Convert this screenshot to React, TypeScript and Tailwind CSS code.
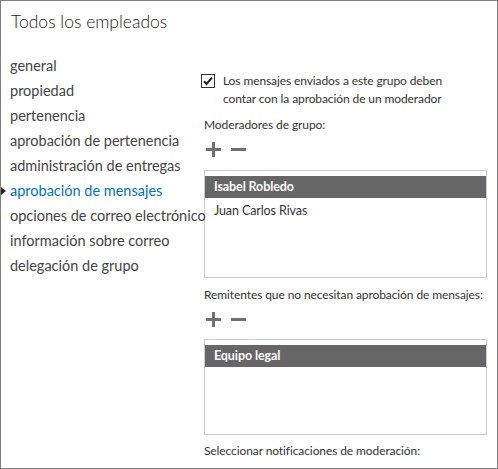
import React from "react";

const font = { fontFamily: '"Segoe UI", Lato, "Open Sans", sans-serif' };

const navItems = [
  "general",
  "propiedad",
  "pertenencia",
  "aprobación de pertenencia",
  "administración de entregas",
  "aprobación de mensajes",
  "opciones de correo electrónico",
  "información sobre correo",
  "delegación de grupo",
];

const PlusMinus = () => (
  <div className="flex items-center gap-[10px] h-[24px] pl-[2px]">
    <svg width="15" height="15" viewBox="0 0 15 15">
      <rect x="6" y="0" width="3" height="15" fill="#707070" />
      <rect x="0" y="6" width="15" height="3" fill="#707070" />
    </svg>
    <svg width="15" height="15" viewBox="0 0 15 15">
      <rect x="0" y="6" width="15" height="3" fill="#707070" />
    </svg>
  </div>
);

const ListBox = ({ items, height }: { items: string[]; height: string }) => (
  <div className={`border border-[#c6cbd0] bg-white pt-[5px] ${height}`}>
    {items.map((name, i) => (
      <div
        key={name}
        className={
          i === 0
            ? "h-[22px] leading-[22px] bg-[#666666] text-white font-bold px-[9px] text-[12.5px]"
            : "h-[26px] leading-[26px] text-[#333] px-[9px] text-[12.5px]"
        }
      >
        {name}
      </div>
    ))}
  </div>
);

export default function App() {
  return (
    <div
      className="w-[498px] h-[469px] border border-[#7f7f7f] bg-white text-[#333] overflow-hidden"
      style={font}
    >
      <h1 className="pl-[10px] pt-[8px] text-[17.5px] leading-[26px] font-light text-[#222]">
        Todos los empleados
      </h1>
      <div className="flex">
        <ul className="w-[203px] pl-[9px] pt-[18px] shrink-0">
          {navItems.map((item) => {
            const active = item === "aprobación de mensajes";
            return (
              <li
                key={item}
                className={`relative h-[25px] leading-[25px] text-[14.5px] whitespace-nowrap ${
                  active ? "text-[#0072c6]" : "text-[#444]"
                }`}
              >
                {active && (
                  <span className="absolute left-[-9px] top-[9px] w-0 h-0 border-y-[4px] border-y-transparent border-l-[5px] border-l-[#222]" />
                )}
                {item}
              </li>
            );
          })}
        </ul>
        <div className="w-[283px] pt-[37px] text-[12px] tracking-[-0.1px]">
          <label className="flex items-start gap-[8px] -ml-[3px]">
            <svg width="14" height="14" viewBox="0 0 14 14" className="mt-[2px] shrink-0">
              <rect x="0.5" y="0.5" width="13" height="13" fill="white" stroke="#333" />
              <path d="M3 7.2 L5.6 10 L11 3.6" fill="none" stroke="#222" strokeWidth="2" />
            </svg>
            <span className="leading-[18px]">
              Los mensajes enviados a este grupo deben
              <br />
              contar con la aprobación de un moderador
            </span>
          </label>
          <div className="mt-[8px] leading-[18px]">Moderadores de grupo:</div>
          <div className="mt-[3px]">
            <PlusMinus />
          </div>
          <div className="mt-[9px]">
            <ListBox items={["Isabel Robledo", "Juan Carlos Rivas"]} height="h-[108px]" />
          </div>
          <div className="mt-[8px] leading-[18px] whitespace-nowrap">
            Remitentes que no necesitan aprobación de mensajes:
          </div>
          <div className="mt-[3px]">
            <PlusMinus />
          </div>
          <div className="mt-[8px]">
            <ListBox items={["Equipo legal"]} height="h-[96px]" />
          </div>
          <div className="mt-[7px] leading-[18px]">
            Seleccionar notificaciones de moderación:
          </div>
        </div>
      </div>
    </div>
  );
}
